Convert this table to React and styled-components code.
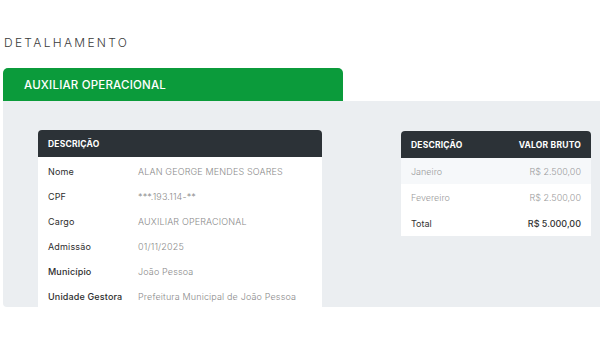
import React from 'react';
import styled, { createGlobalStyle } from 'styled-components';

const GlobalStyle = createGlobalStyle`
  body {
    margin: 0;
    background: #fff;
    font-family: Inter, "Noto Sans", sans-serif;
    overflow: hidden;
  }
`;

const Page = styled.div`
  padding: 35px 0 0 3px;
`;

const Title = styled.h1`
  margin: 0 0 17px 1px;
  font-size: 12px;
  font-weight: 300;
  letter-spacing: 2.3px;
  color: #3a3a3a;
  line-height: 16px;
`;

const Tab = styled.div`
  width: 340px;
  height: 33px;
  box-sizing: border-box;
  padding-left: 21px;
  display: flex;
  align-items: center;
  background: #0b9b3b;
  border-radius: 5px 5px 0 0;
  color: #fff;
  font-size: 11.5px;
  font-weight: 500;
  letter-spacing: 0.2px;
`;

const Panel = styled.div`
  margin-right: -20px;
  height: 206px;
  box-sizing: border-box;
  padding: 29px 0 0 35px;
  background: #ebeef1;
  border-radius: 0 0 4px 4px;
  display: flex;
  align-items: flex-start;
  gap: 79px;
  overflow: hidden;
`;

const Card = styled.div`
  width: ${p => p.$width}px;
  background: #fff;
  border-radius: 4px 4px 0 0;
  overflow: hidden;
  margin-top: ${p => p.$offset || 0}px;
`;

const Head = styled.div`
  height: 27px;
  padding: 0 10px;
  display: flex;
  align-items: center;
  justify-content: space-between;
  background: #2c3237;
  color: #fff;
  font-size: 8.5px;
  font-weight: 700;
  letter-spacing: 0.2px;
`;

const InfoList = styled.div`
  padding-top: 2px;
`;

const InfoRow = styled.div`
  height: 25px;
  padding: 0 10px;
  display: grid;
  grid-template-columns: 90px 1fr;
  align-items: center;
  font-size: 9px;
  letter-spacing: 0.15px;
`;

const Label = styled.span`
  color: #2e2e2e;
  font-weight: ${p => (p.$strong ? 500 : 400)};
`;

const Value = styled.span`
  color: #8a8a8a;
  font-weight: 300;
`;

const MoneyRow = styled.div`
  height: 26px;
  padding: 0 10px;
  display: flex;
  align-items: center;
  justify-content: space-between;
  font-size: 9px;
  background: ${p => (p.$striped ? '#f6f8fa' : '#fff')};
  color: ${p => (p.$total ? '#333' : '#9a9a9a')};
  font-weight: ${p => (p.$total ? 400 : 300)};
`;

const Amount = styled.span`
  font-weight: ${p => (p.$total ? 500 : 300)};
`;

const info = [
  ['Nome', 'ALAN GEORGE MENDES SOARES'],
  ['CPF', '***.193.114-**'],
  ['Cargo', 'AUXILIAR OPERACIONAL'],
  ['Admissão', '01/11/2025'],
  ['Município', 'João Pessoa', true],
  ['Unidade Gestora', 'Prefeitura Municipal de João Pessoa', true],
];

const months = [
  ['Janeiro', 'R$ 2.500,00'],
  ['Fevereiro', 'R$ 2.500,00'],
];

export default function App() {
  return (
    <Page>
      <GlobalStyle />
      <Title>DETALHAMENTO</Title>
      <Tab>AUXILIAR OPERACIONAL</Tab>
      <Panel>
        <Card $width={284}>
          <Head>DESCRIÇÃO</Head>
          <InfoList>
            {info.map(([label, value, strong]) => (
              <InfoRow key={label}>
                <Label $strong={strong}>{label}</Label>
                <Value>{value}</Value>
              </InfoRow>
            ))}
          </InfoList>
        </Card>
        <Card $width={190} $offset={1}>
          <Head>
            <span>DESCRIÇÃO</span>
            <span>VALOR BRUTO</span>
          </Head>
          {months.map(([m, v], i) => (
            <MoneyRow key={m} $striped={i === 0}>
              <span>{m}</span>
              <Amount>{v}</Amount>
            </MoneyRow>
          ))}
          <MoneyRow $total>
            <span>Total</span>
            <Amount $total>R$ 5.000,00</Amount>
          </MoneyRow>
        </Card>
      </Panel>
    </Page>
  );
}
